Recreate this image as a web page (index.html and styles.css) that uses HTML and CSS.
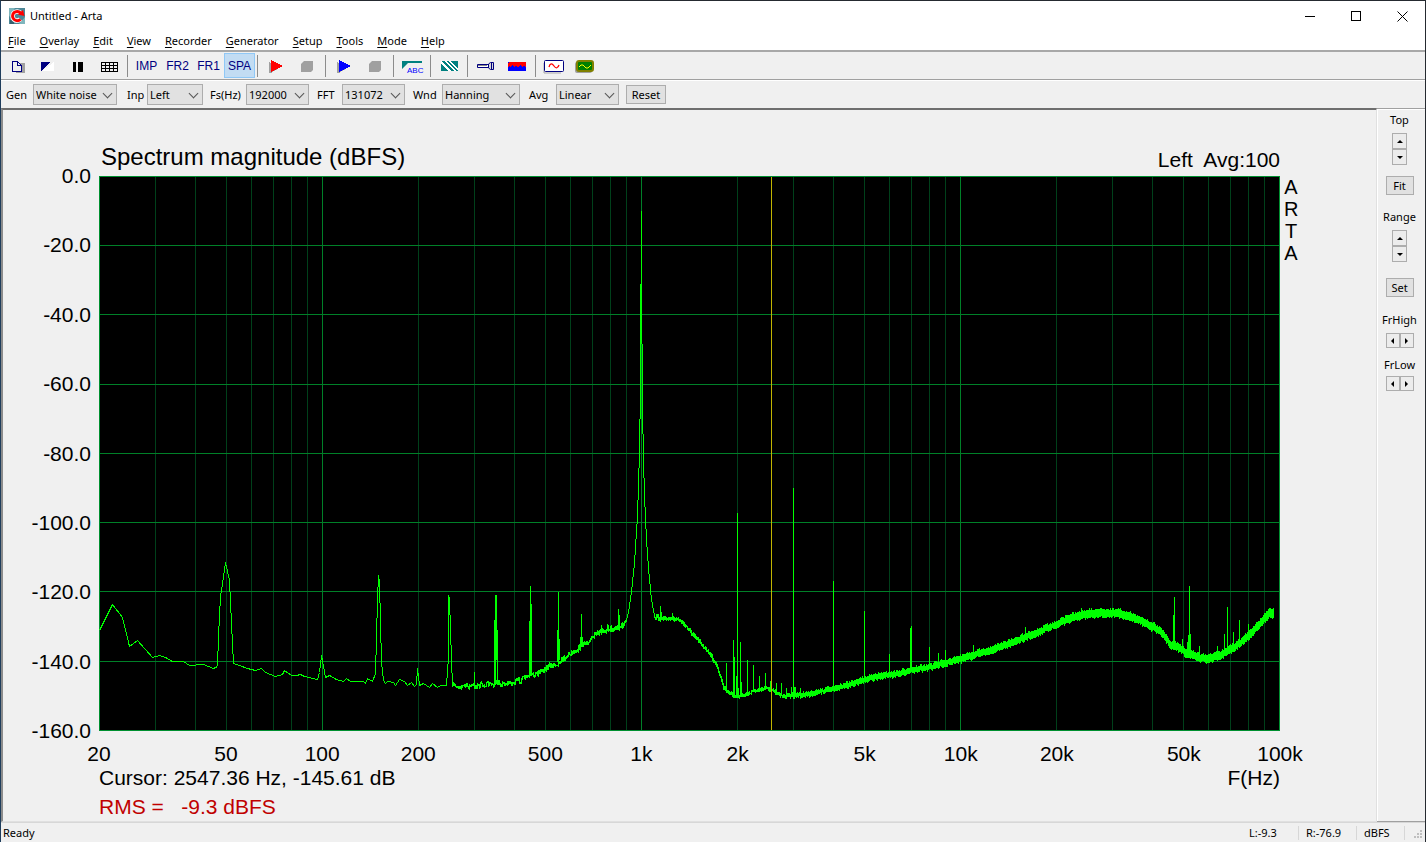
FILE: index.html
```
<!DOCTYPE html>
<html lang="en">
<head>
<meta charset="utf-8">
<title>Untitled - Arta</title>
<link rel="stylesheet" href="styles.css">
</head>
<body>
<div class="window">
  <header class="titlebar">
    <svg class="app-icon" width="16" height="16" viewBox="0 0 16 16"><rect width="16" height="16" fill="#4d8797"/><path d="M0 0h6L0 9zM10 16h6V9z" fill="#7fb6bd"/><path d="M1 12h4v4H1z" fill="#35606e"/><path d="M11.5 11.2A4.6 4.6 0 1 1 11.6 5" fill="none" stroke="#fff" stroke-width="4.6"/><path d="M11.5 11.2A4.6 4.6 0 1 1 11.6 5" fill="none" stroke="#f00" stroke-width="3"/><path d="M8.5 6.5 15.5 8 14 2z" fill="#f00"/></svg>
    <h1 class="title">Untitled - Arta</h1>
    <div class="caption">
      <button class="cap" aria-label="Minimize"><svg width="11" height="11" shape-rendering="crispEdges"><path d="M0 5.500H10" stroke="#000"/></svg></button>
      <button class="cap" aria-label="Maximize"><svg width="11" height="11" shape-rendering="crispEdges"><rect x=".5" y=".5" width="9" height="9" fill="none" stroke="#000"/></svg></button>
      <button class="cap" aria-label="Close"><svg width="11" height="11"><path d="M.5.5l10 10M10.500.5l-10 10" stroke="#000"/></svg></button>
    </div>
  </header>
  <nav class="menubar">
    <button class="menu"><u>F</u>ile</button>
    <button class="menu"><u>O</u>verlay</button>
    <button class="menu"><u>E</u>dit</button>
    <button class="menu"><u>V</u>iew</button>
    <button class="menu"><u>R</u>ecorder</button>
    <button class="menu"><u>G</u>enerator</button>
    <button class="menu"><u>S</u>etup</button>
    <button class="menu"><u>T</u>ools</button>
    <button class="menu"><u>M</u>ode</button>
    <button class="menu"><u>H</u>elp</button>
  </nav>
  <div class="toolbar" role="toolbar">
    <button class="tool" aria-label="New"><svg width="24" height="16" viewBox="0 0 24 16" shape-rendering="crispEdges"><path d="M11 5h9v10h-9z" fill="#a0a0a0"/><path d="M7.500 3.500h5l4 4v6h-9z" fill="#f0f0f0" stroke="#000080"/><path d="M12.500 3.500v4h4" fill="none" stroke="#000080"/></svg></button>
    <button class="tool" aria-label="Overlay"><svg width="24" height="16" viewBox="0 0 24 16" shape-rendering="crispEdges"><path d="M18 4v9H6z" fill="#fff"/><path d="M5 4h10L5 13z" fill="#000080"/></svg></button>
    <button class="tool" aria-label="Columns"><svg width="24" height="16" viewBox="0 0 24 16" shape-rendering="crispEdges"><path d="M6 4h3v10H6zM11 4h5v10h-5z" fill="#000"/></svg></button>
    <button class="tool" aria-label="Table"><svg width="24" height="16" viewBox="0 0 24 16" shape-rendering="crispEdges"><path d="M3.500 4.500h16v9h-16zM3 7.500h17M3 10.500h17M7.500 4v10M11.500 4v10M15.500 4v10" fill="none" stroke="#000"/></svg></button>
    <span class="sep"></span>
    <button class="tool mode">IMP</button>
    <button class="tool mode">FR2</button>
    <button class="tool mode">FR1</button>
    <button class="tool mode active">SPA</button>
    <span class="sep"></span>
    <button class="tool" aria-label="Start recording"><svg width="24" height="16" viewBox="0 0 24 16" shape-rendering="crispEdges"><path d="M4 4l12 5-10 6H4z" fill="#a0a0a0"/><path d="M6 2l12 6-12 6z" fill="#f00"/></svg></button>
    <button class="tool" aria-label="Stop recording"><svg width="24" height="16" viewBox="0 0 24 16"><path d="M8 3h9v9l-2 2H5V6z" fill="#a0a0a0"/></svg></button>
    <span class="sep"></span>
    <button class="tool" aria-label="Start generator"><svg width="24" height="16" viewBox="0 0 24 16" shape-rendering="crispEdges"><path d="M4 4l12 5-10 6H4z" fill="#a0a0a0"/><path d="M6 2l12 6-12 6z" fill="#00f"/></svg></button>
    <button class="tool" aria-label="Stop generator"><svg width="24" height="16" viewBox="0 0 24 16"><path d="M8 3h9v9l-2 2H5V6z" fill="#a0a0a0"/></svg></button>
    <span class="sep"></span>
    <button class="tool" aria-label="Labels"><svg width="24" height="16" viewBox="0 0 24 16"><path d="M1 3h20v2H7l-6 6z" fill="#008080"/><text x="6" y="15" class="abc">ABC</text></svg></button>
    <span class="sep"></span>
    <button class="tool" aria-label="Window"><svg width="24" height="16" viewBox="0 0 24 16" shape-rendering="crispEdges"><path d="M3 3h17v10H3z" fill="#fff"/><path d="M3 3h3l10 10h-3zM8 3h2l10 10h-2zM3 6l7 7H3zM12 3h8v8z" fill="#008080"/></svg></button>
    <span class="sep"></span>
    <button class="tool" aria-label="Calibrate"><svg width="24" height="16" viewBox="0 0 24 16"><path d="M2.500 6.500h11v3h-11z" fill="#fff" stroke="#000080"/><path d="M3 7.500h9" stroke="#888"/><path d="M13.500 6l2-1.500h3v7h-3l-2-1.500z" fill="#d8d8d8" stroke="#000080"/><path d="M16.500 4v8" stroke="#000080"/></svg></button>
    <button class="tool" aria-label="Spectrogram"><svg width="24" height="16" viewBox="0 0 24 16" shape-rendering="crispEdges"><path d="M2 4h17l1 1v8H2z" fill="#00f"/><path d="M3 4h16l1 1v4l-2-1-2 1-2-2-2 2-2-1-2 1-2-2-2 2-1-1-1 1V5z" fill="#f00"/></svg></button>
    <span class="sep"></span>
    <button class="tool" aria-label="Signal"><svg width="24" height="16" viewBox="0 0 24 16"><path d="M1 5v10h17" fill="none" stroke="#aaa"/><rect x="1.500" y="2.500" width="19" height="11" rx="1" fill="#fff" stroke="#000080"/><path d="M6 9c1-4 3-4 5-1s4 2 5-1" fill="none" stroke="#f00" stroke-width="1.300"/></svg></button>
    <button class="tool" aria-label="Scope"><svg width="24" height="16" viewBox="0 0 24 16"><rect x="1" y="4" width="17" height="11" rx="2" fill="#a0a0a0"/><rect x="3" y="3" width="16" height="10" rx="2" fill="#008000" stroke="#808000" stroke-width="2"/><path d="M5 9l2-2 2 0 3 3 2 0 3-3" fill="none" stroke="#ff0"/></svg></button>
  </div>
  <form class="options">
    <label class="l-gen" for="gen">Gen</label>
    <span class="pick p-gen"><select id="gen"><option>White noise</option></select></span>
    <label class="l-inp" for="inp">Inp</label>
    <span class="pick p-inp"><select id="inp"><option>Left</option></select></span>
    <label class="l-fs" for="fs">Fs(Hz)</label>
    <span class="pick p-num"><select id="fs"><option>192000</option></select></span>
    <label class="l-fft" for="fft">FFT</label>
    <span class="pick p-num"><select id="fft"><option>131072</option></select></span>
    <label class="l-wnd" for="wnd">Wnd</label>
    <span class="pick p-wnd"><select id="wnd"><option>Hanning</option></select></span>
    <label class="l-avg" for="avg">Avg</label>
    <span class="pick p-num"><select id="avg"><option>Linear</option></select></span>
    <button type="button" class="btn reset">Reset</button>
  </form>
  <div class="work">
    <main class="chart">
      <div class="head"><h2 class="chart-title">Spectrum magnitude (dBFS)</h2><span class="channel">Left&nbsp; Avg:100</span></div>
      <div class="y-axis"><span>0.0</span><span>-20.0</span><span>-40.0</span><span>-60.0</span><span>-80.0</span><span>-100.0</span><span>-120.0</span><span>-140.0</span><span>-160.0</span></div>
      <svg class="plot" id="plot" viewBox="99 176 1181 555" preserveAspectRatio="none" role="img" aria-label="Spectrum magnitude"></svg>
      <div class="brand"><span>A</span><span>R</span><span>T</span><span>A</span></div>
      <div class="foot">
        <div class="x-axis" id="x-axis"></div>
        <div class="readout"><span>Cursor: 2547.36 Hz, -145.61 dB</span><span>F(Hz)</span></div>
        <div class="rms">RMS =&nbsp;&nbsp; -9.3 dBFS</div>
      </div>
    </main>
    <aside class="side">
      <span class="lbl">Top</span>
      <div class="spin"><button class="arrow up" aria-label="Top up"></button><button class="arrow down" aria-label="Top down"></button></div>
      <button class="btn fit">Fit</button>
      <span class="lbl">Range</span>
      <div class="spin"><button class="arrow up" aria-label="Range up"></button><button class="arrow down" aria-label="Range down"></button></div>
      <button class="btn set">Set</button>
      <span class="lbl">FrHigh</span>
      <div class="spin flat"><button class="arrow left" aria-label="High frequency down"></button><button class="arrow right" aria-label="High frequency up"></button></div>
      <span class="lbl">FrLow</span>
      <div class="spin flat"><button class="arrow left" aria-label="Low frequency down"></button><button class="arrow right" aria-label="Low frequency up"></button></div>
    </aside>
  </div>
  <footer class="status">
    <span class="ready">Ready</span>
    <span class="cell">L:-9.3</span>
    <span class="cell">R:-76.9</span>
    <span class="cell">dBFS</span>
    <svg class="grip" width="12" height="12" viewBox="0 0 12 12"><path d="M8 0h2v2H8zM5 3h2v2H5zM8 3h2v2H8zM2 6h2v2H2zM5 6h2v2H5zM8 6h2v2H8z" fill="#bfbfbf"/></svg>
  </footer>
</div>
<script src="plot.js"></script>
</body>
</html>
```
FILE: plot.js
```
const LEFT = 99, TOP = 176, WIDTH = 1180, HEIGHT = 554;
const plot = document.getElementById('plot');
const xOf = hz => LEFT + WIDTH * Math.log10(hz / 20) / Math.log10(5000);

function add(tag, attrs) {
  const el = document.createElementNS('http://www.w3.org/2000/svg', tag);
  for (const k in attrs) el.setAttribute(k, attrs[k]);
  plot.appendChild(el);
}

add('rect', { x: LEFT, y: TOP, width: WIDTH + 1, height: HEIGHT + 1, class: 'bg' });

// Grid: one vertical line per 1-2-3..9 step, brighter at the decades.
let minor = '', major = '';
for (const decade of [10, 100, 1000, 10000]) {
  for (let n = 1; n < 10; n++) {
    const hz = n * decade;
    if (hz <= 20) continue;
    const line = `M${Math.round(xOf(hz)) + 0.5} ${TOP}v${HEIGHT}`;
    if (n === 1) major += line; else minor += line;
  }
}
for (let i = 1; i < 8; i++) major += `M${LEFT} ${Math.ceil(TOP + HEIGHT * i / 8 - 0.5) + 0.5}h${WIDTH}`;
add('path', { d: minor, class: 'minor' });
add('path', { d: major, class: 'major' });
add('rect', { x: LEFT + 0.5, y: TOP + 0.5, width: WIDTH, height: HEIGHT, class: 'frame' });

// Low-frequency part, where single bins are wider than a pixel.
const low = [99,630,112,604,122,617,129,646,137,640,152,657,159,655,165,657,172,661,183,661,189,665,203,664,213,668,217,666,218,636,220,596,222,583,225,562,229,580,231,623,233,663,239,665,247,668,255,670,261,668,265,672,275,676,282,674,284,670,291,675,296,675,300,674,304,676,317,679,319,672,321,655,325,677,329,675,336,679,343,681,346,678,350,681,363,681,365,683,367,678,372,681,375,673,376,638,377,599,378,575,379,582,380,622,381,662,383,680,385,683,387,681,393,682,395,685,399,679,404,681,407,685,411,682,414,686,416,684,417,668,419,685,423,683,429,687,432,683,437,687,440,685,446,685,448,657,448,595,449,598,450,630,452,686];
let d = '';
for (let i = 0; i < low.length; i += 2) d += `${i ? 'L' : 'M'}${low[i] + 0.5} ${low[i + 1] + 0.5}`;
add('path', { d, class: 'trace' });

// Upper part: noise band given by its centre and thickness.
const band = [[452,686,1],[473,686,1],[493,684,1],[512,683,1],[527,677,2],[533,675,2],[547,667,2],[557,663,2],[570,653,2],[580,647,2],[593,637,2],[607,628,3],[613,629,3],[623,625,3],[627,618,2],[654,616,3],[657,618,4],[677,619,3],[682,623,3],[690,632,3],[700,643,3],[710,655,4],[717,668,3],[720,677,2],[723,687,2],[728,693,3],[735,697,3],[745,695,3],[753,691,3],[767,688,3],[773,691,3],[783,696,3],[800,695,4],[813,693,4],[827,690,4],[840,687,4],[853,683,5],[873,677,5],[893,674,5],[913,670,5],[933,666,5],[960,659,6],[980,653,6],[1000,647,6],[1020,639,6],[1040,631,6],[1053,625,6],[1073,617,7],[1087,614,7],[1103,613,7],[1120,614,7],[1133,617,7],[1147,624,7],[1157,629,7],[1165,637,7],[1170,645,6],[1177,647,7],[1187,653,7],[1197,657,7],[1207,659,7],[1220,655,7],[1233,648,7],[1247,637,7],[1260,623,7],[1268,614,8],[1273,613,8]];

// Columns of the 1 kHz fundamental, from x = 627.
const carrier = [[614,618],[609,614],[602,609],[595,602],[587,595],[577,587],[568,577],[555,568],[539,555],[524,539],[500,524],[468,500],[419,468],[284,419],[211,344],[344,434],[434,478],[478,507],[507,529],[529,547],[547,561],[561,574],[574,584],[584,595],[595,602],[602,608],[608,613],[613,618]];

let seed = 7;
const rnd = () => (seed = (seed * 16807) % 2147483647) / 2147483647;
let bars = '', k = 0, prev = 686;
for (let x = 452; x <= 1273; x++) {
  while (k < band.length - 2 && band[k + 1][0] <= x) k++;
  if (x >= 627 && x < 655) {
    const [top, bottom] = carrier[x - 627];
    bars += `M${x} ${top}h1V${bottom}h-1z`;
    prev = 618;
    continue;
  }
  const [xa, ya, ta] = band[k], [xb, yb, tb] = band[k + 1];
  const t = (x - xa) / (xb - xa);
  const thick = ta + (tb - ta) * t;
  const mid = ya + (yb - ya) * t + (rnd() - 0.5) * (x < 660 ? 5 : 2);
  const joined = x < 780;
  const from = joined ? Math.min(prev, mid) : mid, to = joined ? Math.max(prev, mid) : mid;
  const pad = joined ? thick / 4 : thick / 2;
  const y1 = Math.round(from - pad - rnd() * 1.4), y2 = Math.max(y1 + 1, Math.round(to + pad + rnd() * 1.4));
  bars += `M${x} ${y1}h1v${y2 - y1}h-1z`;
  prev = mid;
}

// Spurs and harmonics: column, peak level, base level.
const spurs = [[474,672,686],[495,595,684],[496,595,660],[497,630,684],[494,620,684],[530,586,675],[529,621,676],[531,604,673],[558,592,662],[557,630,662],[559,639,660],[581,614,646],[580,637,647],[582,637,645],[601,625,635],[618,609,628],[619,615,628],[660,606,618],[661,612,618],[672,613,618],[726,663,690],[733,640,696],[734,657,696],[736,676,697],[737,513,697],[738,688,697],[740,642,696],[741,682,696],[747,660,695],[753,665,691],[759,676,690],[765,673,688],[770,681,690],[776,683,692],[781,683,695],[786,688,697],[791,687,697],[793,488,696],[794,687,696],[795,687,696],[800,688,695],[833,581,689],[864,611,680],[889,654,675],[910,628,671],[911,626,671],[929,647,667],[938,653,665],[945,650,664],[973,645,655],[1025,627,637],[1081,608,616],[1120,608,614],[1173,615,647],[1174,597,647],[1182,639,651],[1187,642,653],[1188,635,653],[1189,586,654],[1190,634,655],[1199,646,658],[1217,646,656],[1224,634,653],[1227,607,652],[1233,632,648],[1239,620,644],[1248,624,637]];
for (const [x, top, base] of spurs) bars += `M${x} ${top}h1v${base - top}h-1z`;
add('path', { d: bars, class: 'band' });

add('path', { d: `M771.5 ${TOP + 1}V${TOP + HEIGHT}`, class: 'cursor' });

const axis = document.getElementById('x-axis');
for (const hz of [20, 50, 100, 200, 500, 1000, 2000, 5000, 10000, 20000, 50000, 100000]) {
  const tick = document.createElement('span');
  tick.className = 'tick';
  tick.textContent = hz < 1000 ? hz : hz / 1000 + 'k';
  tick.style.left = (xOf(hz) - LEFT) / WIDTH * 100 + '%';
  axis.appendChild(tick);
}
```
FILE: styles.css
```
* { box-sizing: border-box; }
body { margin: 0; font: 11px/14px "Noto Sans", "Open Sans", sans-serif; color: #000; }
button, select { font: inherit; color: inherit; margin: 0; padding: 0; border-radius: 0; }
svg { display: block; }
h1, h2 { margin: 0; font-weight: 400; }

.window { display: flex; flex-direction: column; min-height: 100vh; border: 1px solid #252a30; border-left-color: #1f3d5c; background: #f0f0f0; }
.titlebar { display: flex; align-items: center; height: 30px; padding-left: 8px; background: #fff; }
.title { margin-left: 5px; font-size: 11px; line-height: 16px; flex: 1; }
.caption { display: flex; }
.cap { display: grid; place-items: center; width: 46px; height: 30px; border: 0; background: none; }

.menubar { display: flex; align-items: flex-end; height: 21px; gap: 14px; padding-left: 7px; background: #fff; border-bottom: 2px solid #a8a8a8; }
.menu { border: 0; background: none; line-height: 18px; }
.menu u { text-underline-offset: 2px; }

.toolbar { display: flex; align-items: center; height: 28px; border-bottom: 1px solid #a0a0a0; }
.tool { display: grid; place-items: center; width: 31px; height: 25px; border: 0; background: none; }
.sep { width: 6px; height: 22px; border-left: 1px solid #8c8c8c; margin-left: 2px; margin-right: -2px; }
.mode { font: 12px/14px "Liberation Sans", Arial, sans-serif; color: #000080; padding-top: 1px; }
.active { background: #c2dcf3; border: 1px solid #90c8f6; }
.abc { font: 8px "Liberation Sans", Arial, sans-serif; fill: #00f; }

.options { display: flex; align-items: center; height: 28px; padding-left: 5px; border-top: 1px solid #fff; }
.options label { flex: none; white-space: nowrap; }
.l-gen { width: 27px; }
.l-inp { width: 20px; margin-left: 10px; }
.l-fs { width: 36px; margin-left: 7px; }
.l-fft { width: 25px; margin-left: 8px; }
.l-wnd { width: 29px; margin-left: 8px; }
.l-avg { width: 27px; margin-left: 9px; }
.pick { position: relative; height: 21px; flex: none; }
.pick select { width: 100%; height: 100%; appearance: none; padding: 0 2px; border: 1px solid #adadad; background: #e1e1e1; }
.pick::after { content: ""; position: absolute; right: 6px; top: 6px; width: 6px; height: 6px; border: solid #555; border-width: 0 1px 1px 0; transform: rotate(45deg); pointer-events: none; }
.p-gen { width: 84px; }
.p-inp { width: 56px; }
.p-num { width: 63px; }
.p-wnd { width: 78px; }
.btn { border: 1px solid #adadad; background: #e1e1e1; height: 19px; }
.reset { width: 40px; margin-left: 7px; }

.work { display: flex; flex: 1; min-height: 0; }
.chart { flex: 1; display: grid; grid-template-columns: 96px minmax(0, 1fr) 96px; grid-template-rows: 66px minmax(0, 1fr) 90px; border: solid #e0e0e0; border-width: 2px 1px 1px 2px; border-top-color: #6e6e6e; border-left-color: #8c8c8c; font: 21px/24px "Liberation Sans", Arial, sans-serif; }
.head { grid-column: 2; display: flex; justify-content: space-between; align-items: flex-end; padding-bottom: 4px; }
.chart-title { font-size: 24px; line-height: 30px; padding-left: 2px; }
.y-axis { grid-column: 1; grid-row: 2; display: flex; flex-direction: column; justify-content: space-between; text-align: right; padding-right: 8px; margin: -12px 0; }
.plot { grid-column: 2; grid-row: 2; width: 100%; height: 100%; shape-rendering: crispEdges; }
.brand { grid-column: 3; grid-row: 2; display: flex; flex-direction: column; width: 14px; margin-left: 4px; font-size: 20px; line-height: 22px; text-align: center; }
.foot { grid-column: 2; grid-row: 3; display: flex; flex-direction: column; padding-top: 11px; }
.x-axis { position: relative; height: 24px; }
.tick { position: absolute; transform: translateX(-50%); }
.readout { display: flex; justify-content: space-between; }
.rms { margin-top: 5px; color: #c00000; }

.bg { fill: #000; }
.minor { stroke: #00401a; fill: none; }
.major { stroke: #008028; fill: none; }
.frame { stroke: #009030; fill: none; }
.trace { stroke: #0f0; fill: none; }
.band { fill: #0f0; }
.cursor { stroke: #c0b400; fill: none; }

.side { width: 48px; display: flex; flex-direction: column; align-items: center; border: solid #a0a0a0; border-width: 1px 0; box-shadow: inset 1px 1px #fff; padding: 4px 3px 0 0; }
.lbl { white-space: nowrap; }
.spin { display: flex; flex-direction: column; margin-top: 6px; }
.flat { flex-direction: row; }
.arrow { display: grid; place-items: center; width: 15px; height: 16px; border: 1px solid #adadad; background: #ececec; }
.flat .arrow { width: 14px; height: 15px; }
.arrow::before { content: ""; border: 3px solid transparent; }
.up::before { border-bottom-color: #000; border-top: 0; }
.down::before { border-top-color: #000; border-bottom: 0; }
.left::before { border-right-color: #000; border-left: 0; }
.right::before { border-left-color: #000; border-right: 0; }
.fit, .set { width: 28px; }
.fit { margin: 11px 0 15px; }
.set { margin: 16px 0 16px; }
.flat + .lbl { margin-top: 10px; }
.flat + .lbl + .flat { margin-top: 4px; }

.status { display: flex; align-items: center; height: 20px; border-top: 1px solid #d7d7d7; padding-left: 2px; }
.ready { flex: 1; }
.cell { padding: 0 6px 0 7px; border-right: 1px solid #d7d7d7; min-width: 48px; }
.cell:nth-of-type(2) { min-width: 57px; }
.cell:nth-of-type(3) { min-width: 58px; }
.grip { margin: 6px 1px 0 7px; }
```
